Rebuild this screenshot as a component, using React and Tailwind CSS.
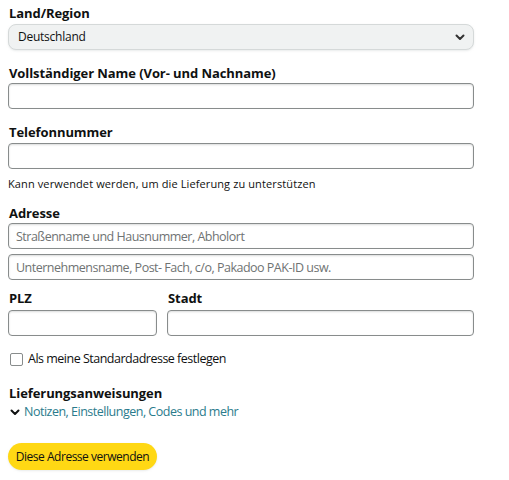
import React, { useState } from "react";

const Label = ({ children, className = "" }) => (
  <div className={"text-[13px] leading-[19px] font-bold tracking-[-0.006em] text-[#0f1111] " + className}>
    {children}
  </div>
);

const Field = ({ placeholder = "", className = "" }) => (
  <input
    type="text"
    placeholder={placeholder}
    className={
      "block w-full h-[26px] px-[7px] rounded-[4px] border border-[#888c8c] bg-white text-[12.5px] tracking-[-0.04em] text-[#0f1111] placeholder:text-[#6f7373] shadow-[inset_0_1px_2px_rgba(15,17,17,0.15)] outline-none " +
      className
    }
  />
);

const App = () => {
  const [isDefault, setIsDefault] = useState(false);

  return (
    <div className="min-h-screen bg-white font-['Open_Sans',sans-serif]">
      <div className="w-[466px] ml-2 pt-1">
        <Label className="ml-px">Land/Region</Label>
        <div className="mt-px h-[26px] rounded-[8px] border border-[#d5d9d9] bg-[#f0f2f2] shadow-[0_1px_2px_rgba(213,217,217,0.5)] flex items-center justify-between pl-[9px] pr-[8px]">
          <span className="text-[12px] tracking-[-0.02em] text-[#0f1111]">Deutschland</span>
          <svg width="10" height="7" viewBox="0 0 10 7" className="text-[#333]">
            <path d="M1.5 1.5 L5 5 L8.5 1.5" fill="none" stroke="currentColor" strokeWidth="2" strokeLinecap="round" strokeLinejoin="round" />
          </svg>
        </div>

        <Label className="mt-[14px] ml-px">Vollständiger Name (Vor- und Nachname)</Label>
        <Field />

        <Label className="mt-[14px] ml-px">Telefonnummer</Label>
        <Field className="mt-px" />
        <div className="mt-[7px] text-[11px] leading-[15px] tracking-[0.01em] text-[#0f1111]">
          Kann verwendet werden, um die Lieferung zu unterstützen
        </div>

        <Label className="mt-[13px] ml-px">Adresse</Label>
        <Field placeholder="Straßenname und Hausnummer, Abholort" />
        <Field className="mt-[5px]" placeholder="Unternehmensname, Post- Fach, c/o, Pakadoo PAK-ID usw." />

        <div className="mt-[9px] flex gap-[10px]">
          <div className="w-[149px]">
            <Label className="ml-px">PLZ</Label>
            <Field className="mt-[2px]" />
          </div>
          <div className="flex-1">
            <Label className="ml-px">Stadt</Label>
            <Field className="mt-[2px]" />
          </div>
        </div>

        <label className="mt-[14px] flex items-center gap-[5px] h-[18px] pl-[2px] cursor-pointer">
          <span
            onClick={() => setIsDefault(!isDefault)}
            className={
              "w-[13px] h-[13px] rounded-[2px] border border-[#888c8c] flex items-center justify-center " +
              (isDefault ? "bg-[#007185]" : "bg-white")
            }
          ></span>
          <span className="text-[12.5px] tracking-[-0.04em] text-[#0f1111]">Als meine Standardadresse festlegen</span>
        </label>

        <Label className="mt-[16px] ml-px">Lieferungsanweisungen</Label>
        <div className="flex items-center gap-[4px] h-[18px] pl-[2px]">
          <svg width="10" height="7" viewBox="0 0 10 7" className="text-[#0f1111]">
            <path d="M1.5 1.5 L5 5 L8.5 1.5" fill="none" stroke="currentColor" strokeWidth="2" strokeLinecap="round" strokeLinejoin="round" />
          </svg>
          <span className="text-[12.5px] tracking-[-0.04em] text-[#2a7b8c]">Notizen, Einstellungen, Codes und mehr</span>
        </div>

        <button
          type="button"
          className="mt-[22px] h-[27px] w-[149px] rounded-full bg-[#ffd814] text-[12px] tracking-[-0.04em] text-[#0f1111] shadow-[0_1px_2px_rgba(213,217,217,0.5)]"
        >
          Diese Adresse verwenden
        </button>
      </div>
    </div>
  );
};

export default App;
